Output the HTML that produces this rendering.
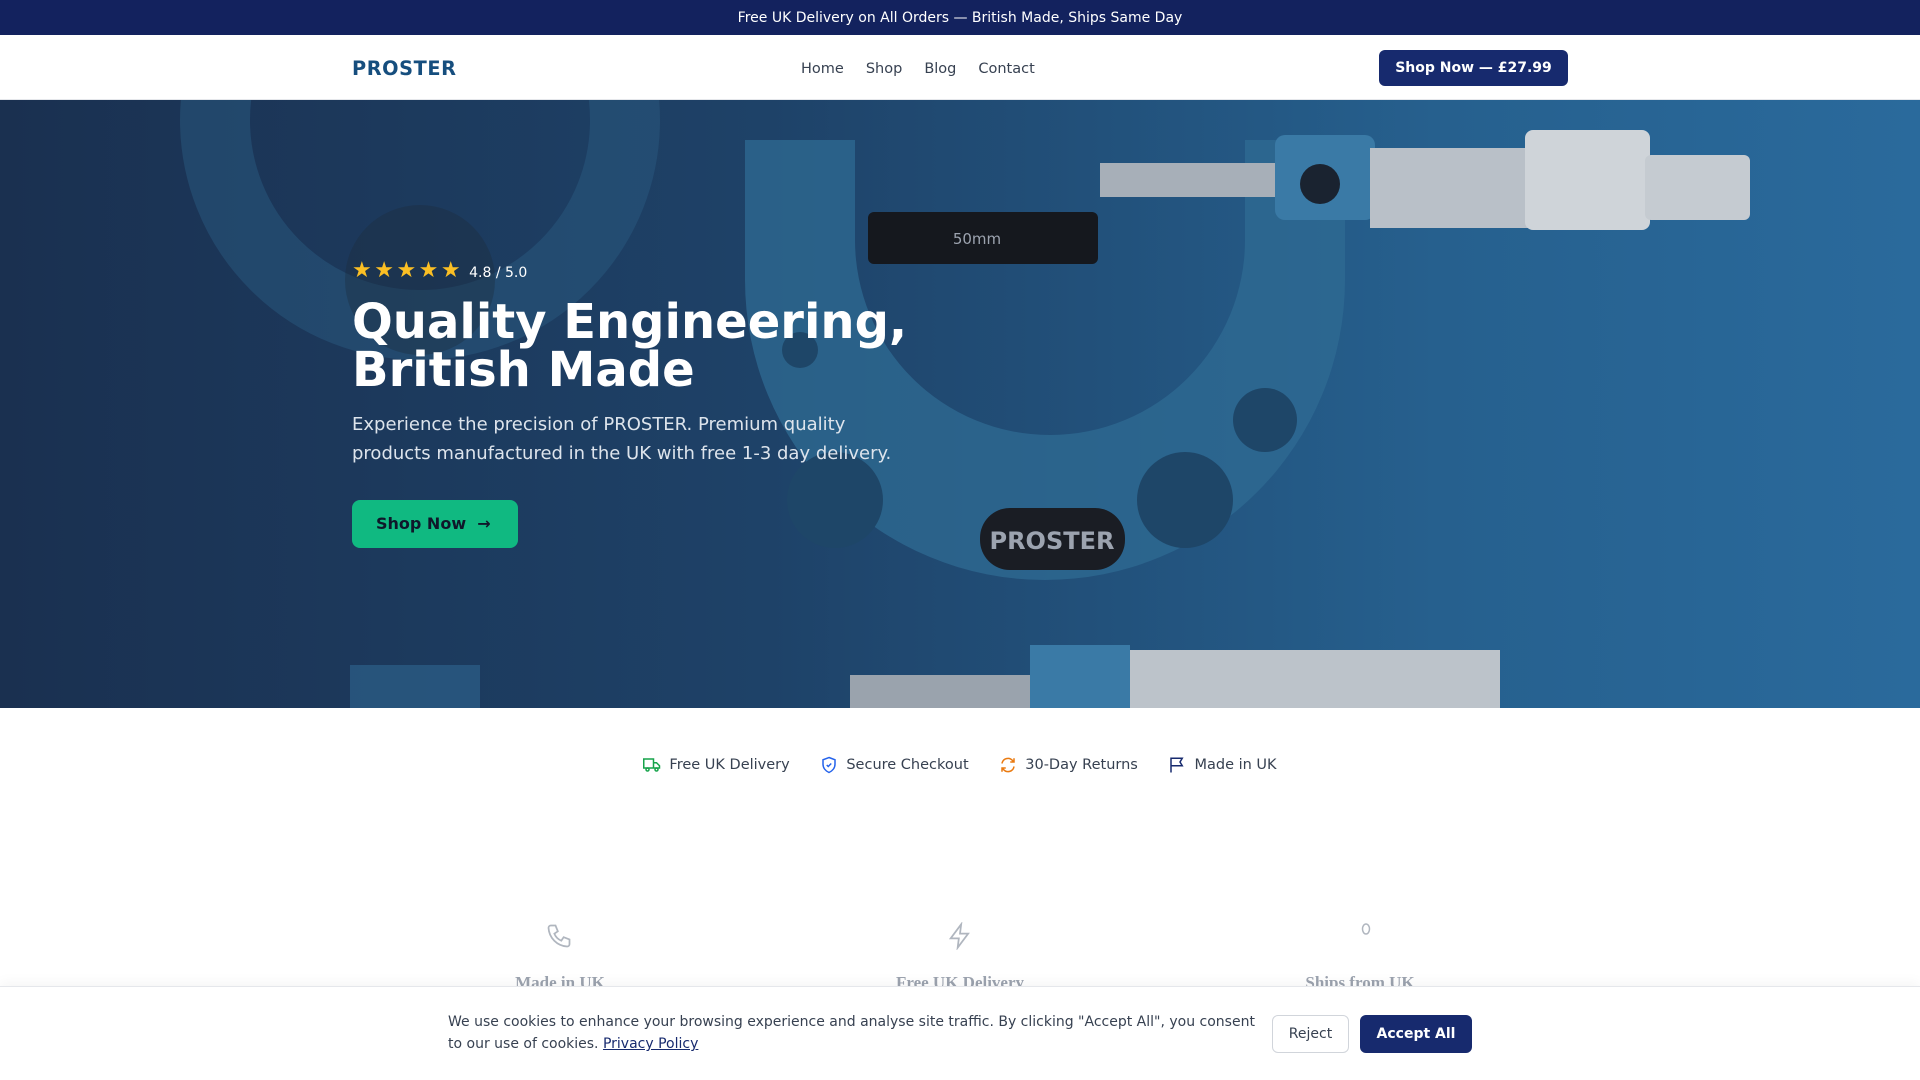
<!DOCTYPE html>
<html><head><meta charset="utf-8"><style>
*{margin:0;padding:0;box-sizing:border-box}
body{width:1920px;height:1080px;overflow:hidden;font-family:"DejaVu Sans","Liberation Sans",sans-serif;background:#fff;position:relative}
.top{height:35px;background:#13225e;color:#fff;font-size:14px;text-align:center;line-height:37px}
.nav{height:65px;border-bottom:1px solid #e5e7eb;position:relative}
.logo{position:absolute;left:352px;top:22px;font-weight:bold;font-size:19.3px;color:#164e7e;letter-spacing:.6px}
.links{position:absolute;left:801px;top:26px;font-size:14.5px;color:#374151}
.links span{margin-right:22px}
.nbtn{position:absolute;left:1379px;top:15px;width:189px;height:36px;background:#172a6e;color:#fff;border-radius:6px;font-weight:bold;font-size:14px;text-align:center;line-height:36px}
.hero{position:absolute;top:100px;left:0;width:1920px;height:608px;background:linear-gradient(90deg,#1a3050 0%,#1e4268 40%,#26608e 75%,#2a6a9c 100%);overflow:hidden}
.hero svg{position:absolute;left:0;top:0}
.stars{position:absolute;left:352px;top:158px;font-size:14px;color:#fff}
.stars b{color:#fbbf24;font-size:22px;letter-spacing:2.5px;font-weight:normal;margin-right:6px}
h1{position:absolute;left:352px;top:198px;font-size:48px;line-height:48px;color:#fff;font-weight:bold}
.p{position:absolute;left:352px;top:310px;width:550px;font-size:18px;line-height:29px;color:#dde4ec}
.hb{position:absolute;left:352px;top:400px;width:166px;height:48px;background:#10b981;border-radius:8px;color:#0f172a;font-weight:bold;font-size:16px;line-height:48px;padding-left:24px}
.trust{position:absolute;top:756px;left:0;width:1920px;text-align:center;font-size:14.5px;color:#374151}
.trust span{margin:0 13px;display:inline-flex;align-items:center;gap:8px}
.feat{position:absolute;top:973px;font-family:"Liberation Serif",serif;font-weight:bold;color:#9ca3af;font-size:17px;text-align:center;width:300px}
.cookie{position:absolute;top:986px;left:0;width:1920px;height:94px;background:#fff;border-top:1px solid #e5e7eb;box-shadow:0 -4px 12px rgba(0,0,0,.04)}
.ct{position:absolute;left:448px;top:24px;width:820px;font-size:14px;line-height:22px;color:#374151}
.ct a{color:#172a6e;text-decoration:underline}
.rj{position:absolute;left:1272px;top:28px;width:77px;height:38px;border:1px solid #d1d5db;border-radius:6px;font-size:14px;color:#374151;text-align:center;line-height:36px}
.ac{position:absolute;left:1360px;top:28px;width:112px;height:38px;background:#172a6e;border-radius:6px;font-size:14px;color:#fff;font-weight:bold;text-align:center;line-height:38px}
</style></head><body>
<div class="top">Free UK Delivery on All Orders — British Made, Ships Same Day</div>
<div class="nav"><div class="logo">PROSTER</div><div class="links"><span>Home</span><span>Shop</span><span>Blog</span><span>Contact</span></div><div class="nbtn">Shop Now — £27.99</div></div>
<div class="hero">
<svg width="1920" height="608" viewBox="0 0 1920 608">
<g fill="none" stroke="#2a5a80" stroke-opacity=".5">
<circle cx="420" cy="20" r="205" stroke-width="70"/>
</g>
<path d="M745 40 L855 40 L855 140 A195 195 0 0 0 1245 140 L1245 40 L1345 40 L1345 180 A295 295 0 0 1 745 180 Z" fill="#2f6b93" opacity=".75"/>
<g fill="#1e4668"><circle cx="835" cy="400" r="48"/><circle cx="1185" cy="400" r="48"/><circle cx="800" cy="250" r="18"/><circle cx="1265" cy="320" r="32"/></g>
<rect x="980" y="408" width="145" height="62" rx="30" fill="#1a1d24"/>
<text x="1052" y="449" font-family="DejaVu Sans" font-size="24" font-weight="bold" fill="#9ca3af" text-anchor="middle">PROSTER</text>
<rect x="868" y="112" width="230" height="52" rx="6" fill="#15181e"/>
<text x="977" y="144" font-family="DejaVu Sans" font-size="15" fill="#9ca3af" text-anchor="middle">50mm</text>
<rect x="1100" y="63" width="175" height="34" fill="#a7afb8"/>
<rect x="1275" y="35" width="100" height="85" rx="10" fill="#3a7aa6"/>
<circle cx="1320" cy="84" r="20" fill="#1a2330"/>
<rect x="1370" y="48" width="160" height="80" fill="#b9c0c8"/>
<rect x="1525" y="30" width="125" height="100" rx="8" fill="#cfd4d9"/>
<rect x="1645" y="55" width="105" height="65" rx="6" fill="#c5cbd1"/>
<rect x="850" y="575" width="180" height="40" fill="#9aa3ad"/>
<rect x="1030" y="545" width="100" height="70" fill="#3a7aa6"/>
<rect x="1130" y="550" width="370" height="60" fill="#bcc3ca"/>
<rect x="350" y="565" width="130" height="50" fill="#2c6089" opacity=".7"/>
<circle cx="420" cy="180" r="75" fill="#1d2a3a" opacity=".35"/>
</svg>
<div class="stars"><b>★★★★★</b>4.8 / 5.0</div>
<h1>Quality Engineering,<br>British Made</h1>
<div class="p">Experience the precision of PROSTER. Premium quality products manufactured in the UK with free 1-3 day delivery.</div>
<div class="hb">Shop Now &nbsp;→</div>
</div>
<div class="trust">
<span><svg width="18" height="18" viewBox="0 0 24 24" fill="none" stroke="#16a34a" stroke-width="2"><path d="M1 4h13v12H1zM14 9h4l4 4v3h-8"/><circle cx="6" cy="18" r="2"/><circle cx="18" cy="18" r="2"/></svg>Free UK Delivery</span>
<span><svg width="18" height="18" viewBox="0 0 24 24" fill="none" stroke="#2563eb" stroke-width="2"><path d="M12 2l8 3v6c0 5-3.5 9-8 11-4.5-2-8-6-8-11V5z"/><path d="M9 12l2 2 4-4"/></svg>Secure Checkout</span>
<span><svg width="18" height="18" viewBox="0 0 24 24" fill="none" stroke="#ea7a10" stroke-width="2"><path d="M4 10a8 8 0 0 1 14-4l2 2M20 14a8 8 0 0 1-14 4l-2-2M20 3v5h-5M4 21v-5h5"/></svg>30-Day Returns</span>
<span><svg width="18" height="18" viewBox="0 0 24 24" fill="none" stroke="#172a6e" stroke-width="2"><path d="M4 22V3h15l-3 5 3 5H4"/></svg>Made in UK</span>
</div>
<svg style="position:absolute;left:545px;top:922px" width="28" height="28" viewBox="0 0 24 24" fill="none" stroke="#b0b6bf" stroke-width="1.5"><path d="M5 3h4l2 5-3 2a11 11 0 0 0 6 6l2-3 5 2v4a2 2 0 0 1-2 2A17 17 0 0 1 3 5a2 2 0 0 1 2-2z"/></svg>
<svg style="position:absolute;left:946px;top:922px" width="28" height="28" viewBox="0 0 24 24" fill="none" stroke="#b0b6bf" stroke-width="1.5"><path d="M13 2L4 14h7l-1 8 9-12h-7z"/></svg>
<svg style="position:absolute;left:1360px;top:922px" width="12" height="14" viewBox="0 0 12 14" fill="none" stroke="#b0b6bf" stroke-width="1.5"><ellipse cx="6" cy="7" rx="3.5" ry="5"/></svg>
<div class="feat" style="left:410px">Made in UK</div>
<div class="feat" style="left:810px">Free UK Delivery</div>
<div class="feat" style="left:1210px">Ships from UK</div>
<div class="cookie"><div class="ct">We use cookies to enhance your browsing experience and analyse site traffic. By clicking "Accept All", you consent to our use of cookies. <a>Privacy Policy</a></div><div class="rj">Reject</div><div class="ac">Accept All</div></div>
</body></html>
